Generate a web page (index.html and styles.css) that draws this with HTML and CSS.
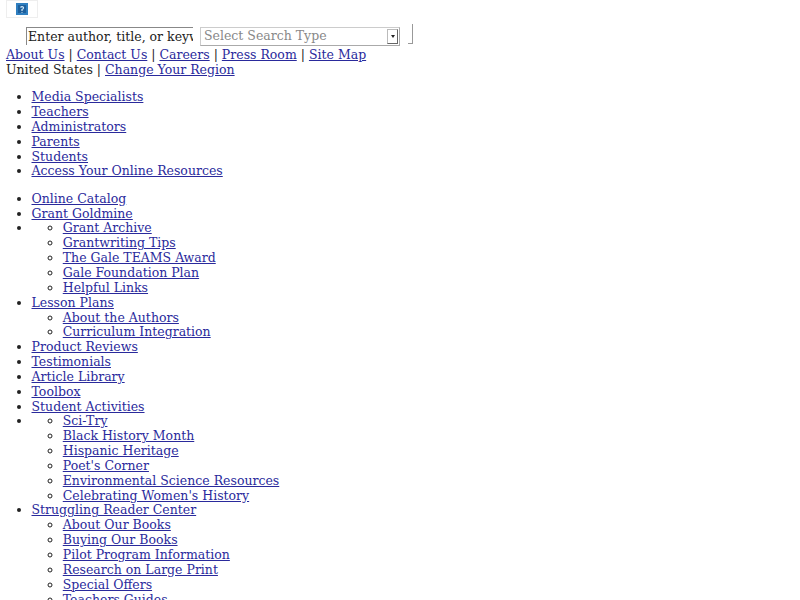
FILE: index.html
```html
<!DOCTYPE html>
<html lang="en">
<head>
<meta charset="utf-8">
<title>Gale</title>
<link rel="stylesheet" href="styles.css">
</head>
<body>
<div class="logo-box"><svg class="logo-icon" width="12" height="12" viewBox="0 0 12 12"><rect width="12" height="12" fill="#2f7fc0"/><rect x="2" y="2" width="8" height="8" fill="#1d5f9c"/><path d="M4.500 4.500 Q6 2.800 7.500 4.300 Q7.800 5.800 6 6.500 V8 M6 9 V9.800" fill="none" stroke="#cfe6f5" stroke-width="1.200"/></svg></div>
<form class="search">
<input class="search-text" type="text" value="Enter author, title, or keyword">
<span class="search-select"><span class="select-label">Select Search Type</span><span class="select-arrow"></span></span>
<span class="search-go"></span>
</form>
<div class="line"><a href="#">About Us</a> | <a href="#">Contact Us</a> | <a href="#">Careers</a> | <a href="#">Press Room</a> | <a href="#">Site Map</a></div>
<div class="line">United States | <a href="#">Change Your Region</a></div>
<ul class="menu">
<li><a href="#">Media Specialists</a></li>
<li><a href="#">Teachers</a></li>
<li><a href="#">Administrators</a></li>
<li><a href="#">Parents</a></li>
<li><a href="#">Students</a></li>
<li><a href="#">Access Your Online Resources</a></li>
</ul>
<ul class="menu">
<li><a href="#">Online Catalog</a></li>
<li><a href="#">Grant Goldmine</a></li>
<li><ul>
<li><a href="#">Grant Archive</a></li>
<li><a href="#">Grantwriting Tips</a></li>
<li><a href="#">The Gale TEAMS Award</a></li>
<li><a href="#">Gale Foundation Plan</a></li>
<li><a href="#">Helpful Links</a></li>
</ul></li>
<li><a href="#">Lesson Plans</a><ul>
<li><a href="#">About the Authors</a></li>
<li><a href="#">Curriculum Integration</a></li>
</ul></li>
<li><a href="#">Product Reviews</a></li>
<li><a href="#">Testimonials</a></li>
<li><a href="#">Article Library</a></li>
<li><a href="#">Toolbox</a></li>
<li><a href="#">Student Activities</a></li>
<li><ul>
<li><a href="#">Sci-Try</a></li>
<li><a href="#">Black History Month</a></li>
<li><a href="#">Hispanic Heritage</a></li>
<li><a href="#">Poet's Corner</a></li>
<li><a href="#">Environmental Science Resources</a></li>
<li><a href="#">Celebrating Women's History</a></li>
</ul></li>
<li><a href="#">Struggling Reader Center</a><ul>
<li><a href="#">About Our Books</a></li>
<li><a href="#">Buying Our Books</a></li>
<li><a href="#">Pilot Program Information</a></li>
<li><a href="#">Research on Large Print</a></li>
<li><a href="#">Special Offers</a></li>
<li><a href="#">Teachers Guides</a></li>
</ul></li>
</ul>
</body>
</html>
```
FILE: styles.css
```css
html, body { height: 600px; overflow: hidden; }
body {
  margin: 0;
  padding: 0 6px;
  background: #fff;
  color: #222;
  font-family: "DejaVu Serif", serif;
  font-size: 12.5px;
  line-height: 14.84px;
}
a { color: #2a2a9c; text-decoration: underline; }
.logo-box {
  width: 32px;
  height: 18px;
  box-sizing: border-box;
  border: 1px solid #eee;
  display: flex;
  align-items: center;
  justify-content: center;
}
.search {
  display: flex;
  align-items: flex-start;
  margin: 9px 0 1px 20px;
  height: 20px;
}
.search-text {
  width: 167px;
  height: 18px;
  box-sizing: border-box;
  padding: 0 0 0 1px;
  border: 0;
  border-left: 1px solid #888;
  border-top: 1px solid #888;
  font: 12.5px "DejaVu Serif", serif;
  color: #222;
  background: #fff;
  outline: 0;
}
.search-select {
  width: 200px;
  height: 19px;
  margin-left: 7px;
  box-sizing: border-box;
  border: 1px solid #ccc;
  border-bottom-color: #aaa;
  border-right-color: #aaa;
  display: flex;
  align-items: center;
  justify-content: space-between;
  padding: 0 0 0 3px;
  color: #888;
}
.select-arrow {
  width: 11px;
  height: 15px;
  margin-right: 1px;
  border: 1px solid #bbb;
  border-right-color: #666;
  border-bottom-color: #666;
  box-sizing: border-box;
  display: flex;
  align-items: center;
  justify-content: center;
}
.select-arrow::after {
  content: "";
  border: 2.5px solid transparent;
  border-top: 3px solid #222;
  border-bottom: 0;
}
.search-go {
  width: 5px;
  height: 20px;
  margin: -3px 0 0 8px;
  box-sizing: border-box;
  border-right: 1px solid #999;
  border-bottom: 1px solid #999;
}
.menu {
  margin: 12.500px 0;
  padding: 0 0 0 25.500px;
}
.menu ul { margin: 0; padding: 0 0 0 31.250px; }
```
